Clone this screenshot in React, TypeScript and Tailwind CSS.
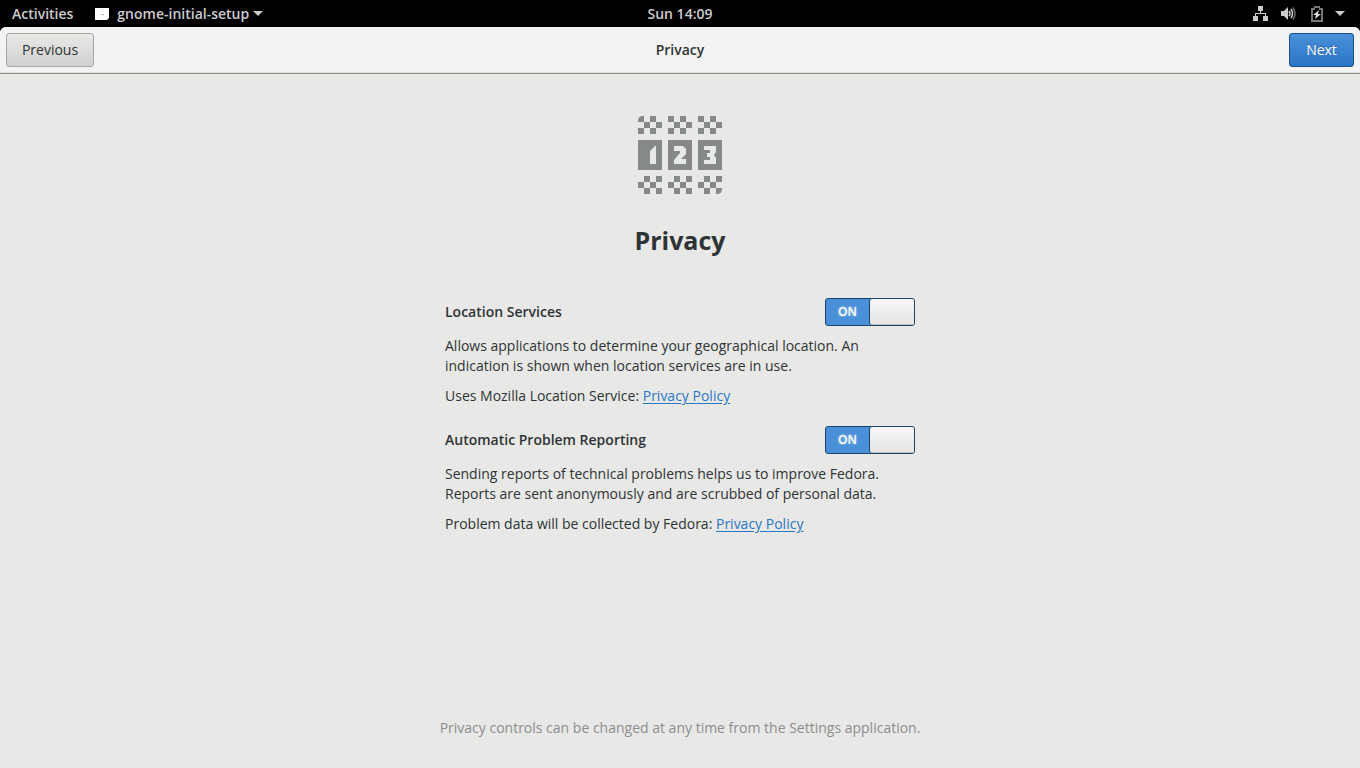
import React, { useId, useState } from 'react';

const GRAY = '#858989';

// Checker cells [column, row] of each counter wheel, 6px a cell
const TOP_WHEELS = [
  [[2, 0], [1, 1], [3, 1], [0, 2], [2, 2]],
  [[0, 0], [2, 0], [1, 1], [3, 1], [0, 2], [2, 2]],
  [[0, 0], [2, 0], [1, 1], [3, 1], [0, 2], [2, 2]],
];

const BOTTOM_WHEELS = [
  [[1, 0], [3, 0], [0, 1], [2, 1], [1, 2], [3, 2]],
  [[1, 0], [3, 0], [0, 1], [2, 1], [1, 2], [3, 2]],
  [[1, 0], [3, 0], [0, 1], [2, 1], [1, 2]],
];

function Wheel({ cells, x, y }: { cells: number[][]; x: number; y: number }) {
  return (
    <>
      {cells.map(([c, r]) => (
        <rect key={`${c}-${r}`} x={x + c * 6} y={y + r * 6} width="6" height="6" />
      ))}
    </>
  );
}

function PrivacyIcon() {
  return (
    <svg width="84" height="78" viewBox="0 0 84 78" fill={GRAY} aria-hidden="true">
      {TOP_WHEELS.map((cells, i) => <Wheel key={i} cells={cells} x={i * 30} y={0} />)}
      {BOTTOM_WHEELS.map((cells, i) => <Wheel key={i} cells={cells} x={i * 30} y={60} />)}
      <path d="M0 6V5Q0 0 5 0H6V6Z" />
      <path d="M78 72H84V73Q84 78 79 78H78Z" />
      <path d="M0 24H24V54H0ZM30 24H54V54H30ZM60 24H84V54H60Z" />
      <g fill="#e8e8e6">
        <path d="M18 30V48H12V35L17 30Z" />
        <path d="M36 30H45L48 33V38L43 43H48V48H36V44L42 37V35H36Z" />
        <path d="M66 30H78V36L76 39L78 42V48H66V44H72V41H69V37H72V34H66Z" />
      </g>
    </svg>
  );
}

function Caret() {
  return (
    <svg width="10" height="5" viewBox="0 0 10 5" fill="#ccc" aria-hidden="true">
      <path d="M0 0H10L5 5Z" />
    </svg>
  );
}

function NetworkIcon() {
  return (
    <svg width="16" height="16" viewBox="0 0 16 16" fill="#ccc" aria-hidden="true">
      <path d="M5 0H10V5H8V7H13V10H15V15H10V10H12V8H3V10H5V15H0V10H2V7H7V5H5Z" />
    </svg>
  );
}

function VolumeIcon() {
  return (
    <svg width="16" height="16" viewBox="0 0 16 16" fill="none" aria-hidden="true">
      <path d="M0 5H3L7 1V14L3 10H0Z" fill="#ccc" />
      <path d="M8 5Q10 7.5 8 10M10 3Q13 7.5 10 12" stroke="#ccc" strokeWidth="1.6" />
      <path d="M12 1.5Q16 7.5 12 13.5" stroke="#666" strokeWidth="1.6" />
    </svg>
  );
}

function BatteryIcon() {
  return (
    <svg width="12" height="16" viewBox="0 0 12 16" aria-hidden="true">
      <path d="M3 0H9V2H12V16H0V2H3ZM2 4V14H10V4H8V2H4V4Z" fill="#777" fillRule="evenodd" />
      <path d="M8 4L2 9H5L4 13L10 8H7Z" fill="#ddd" />
    </svg>
  );
}

function TopBar() {
  return (
    <header className="grid h-[27px] grid-cols-[1fr_auto_1fr] items-center bg-black text-[14px] leading-[18px] font-semibold text-[#ccc]">
      <div className="flex items-center pl-3">
        <button type="button">Activities</button>
        <button type="button" className="ml-[22px] flex items-center">
          <svg width="14" height="12" viewBox="0 0 14 12" className="mr-2" aria-hidden="true">
            <path d="M0 0H14V10L12 12H0Z" fill="#fff" />
            <path d="M6 6H9V7H6Z" fill="#bbb" />
          </svg>
          <span className="mr-1">gnome-initial-setup</span>
          <Caret />
        </button>
      </div>
      <button type="button">Sun 14:09</button>
      <button type="button" aria-label="System menu" className="flex items-center justify-self-end pr-[15px]">
        <NetworkIcon />
        <span className="ml-3"><VolumeIcon /></span>
        <span className="ml-[14px]"><BatteryIcon /></span>
        <span className="ml-3"><Caret /></span>
      </button>
    </header>
  );
}

function Switch({ id }: { id: string }) {
  const [on, setOn] = useState(true);
  return (
    <span className="relative block h-7 w-[90px]">
      <input
        id={id} type="checkbox" role="switch" checked={on} onChange={(e) => setOn(e.target.checked)}
        className="absolute inset-0 z-10 m-0 h-full w-full cursor-pointer opacity-0"
      />
      <span className={`flex h-full overflow-hidden rounded-[3px] border border-[#184472] ${on ? 'bg-[#4a90d9]' : 'flex-row-reverse bg-[#ccc]'}`}>
        <span className="flex flex-1 items-center justify-center text-[12px] font-semibold text-white [text-shadow:0_0_3px_#ffffff99]">
          {on ? 'ON' : 'OFF'}
        </span>
        <span className="w-[45px] rounded-l-[3px] border-l border-[#184472] bg-linear-to-b from-[#f7f7f7] to-[#e4e4e3] shadow-[inset_0_-1px_0_#bbb]" />
      </span>
    </span>
  );
}

interface OptionProps {
  title: string;
  lines: string[];
  policy: string;
}

function PrivacyOption({ title, lines, policy }: OptionProps) {
  const id = useId();
  return (
    <section>
      <div className="flex items-center justify-between">
        <label htmlFor={id} className="font-semibold">{title}</label>
        <Switch id={id} />
      </div>
      <p className="mt-[10px]">
        {lines[0]}<br />{lines[1]}
      </p>
      <p className="mt-[10px]">
        {policy}{' '}
        <a href="#privacy-policy" className="text-[#2a76c6] underline underline-offset-2">Privacy Policy</a>
      </p>
    </section>
  );
}

export default function App() {
  return (
    <div className="flex min-h-screen flex-col bg-black font-['Open_Sans','Noto_Sans',sans-serif] text-[14px] leading-5 text-[#2e3436]">
      <TopBar />
      <div className="flex flex-1 flex-col overflow-hidden rounded-t-[6px] bg-[#e8e8e6]">
        <div className="grid h-[47px] grid-cols-[1fr_auto_1fr] items-center border-b border-[#8d8d88] bg-[#f3f3f3] px-[6px] shadow-[inset_0_-1px_0_#dededc]">
          <button
            type="button"
            className="h-[34px] w-[88px] justify-self-start rounded-[3px] border border-[#a7a7a2] bg-linear-to-b from-[#e9e9e7] to-[#d0d0ce]"
          >
            Previous
          </button>
          <h1 className="font-semibold">Privacy</h1>
          <button
            type="button"
            className="h-[34px] w-[65px] justify-self-end rounded-[3px] border border-[#1c5187] bg-linear-to-b from-[#4a90d9] to-[#2a76c6] text-white [text-shadow:0_-1px_#00000055]"
          >
            Next
          </button>
        </div>

        <main className="flex flex-1 flex-col items-center px-4 pt-[42px] pb-[30px]">
          <PrivacyIcon />
          <h2 className="mt-[31px] text-[25px] leading-[30px] font-bold">Privacy</h2>

          <div className="mt-[43px] flex w-full max-w-[470px] flex-col gap-5">
            <PrivacyOption
              title="Location Services"
              lines={['Allows applications to determine your geographical location. An', 'indication is shown when location services are in use.']}
              policy="Uses Mozilla Location Service:"
            />
            <PrivacyOption
              title="Automatic Problem Reporting"
              lines={['Sending reports of technical problems helps us to improve Fedora.', 'Reports are sent anonymously and are scrubbed of personal data.']}
              policy="Problem data will be collected by Fedora:"
            />
          </div>

          <p className="mt-auto pt-6 text-[#8b8e8f]">Privacy controls can be changed at any time from the Settings application.</p>
        </main>
      </div>
    </div>
  );
}
